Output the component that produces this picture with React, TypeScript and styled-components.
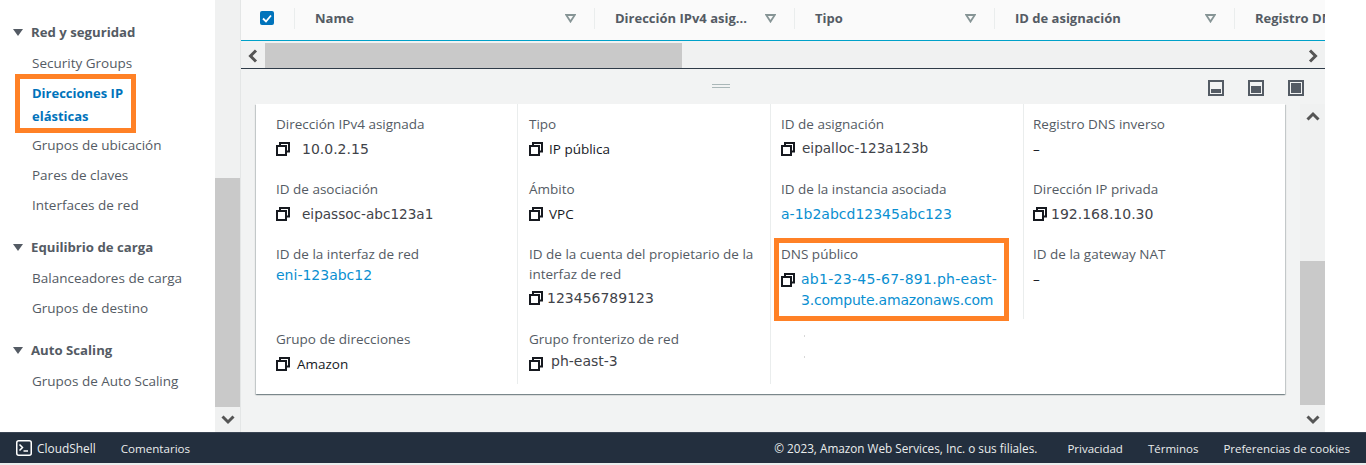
import React from 'react';
import styled, { createGlobalStyle } from 'styled-components';

const GlobalStyle = createGlobalStyle`
    html, body {
        margin: 0;
        padding: 0;
        background: #ffffff;
        overflow: hidden;
    }
    * {
        box-sizing: border-box;
    }
`;

const uiFont = `"Open Sans", "Noto Sans", sans-serif`;
const dataFont = `"DejaVu Sans", sans-serif`;

const Page = styled.div`
    width: 1366px;
    height: 465px;
    display: flex;
    flex-direction: column;
    font-family: ${uiFont};
    font-size: 13.5px;
    overflow: hidden;
    background: #fff;
`;

const Body = styled.div`
    height: 432px;
    display: flex;
`;

/* ---------- side nav ---------- */

const Sidebar = styled.nav`
    width: 215px;
    padding-top: 17px;
    background: #fff;
`;

const NavSection = styled.div`
    margin-bottom: 12px;
`;

const NavTitle = styled.div`
    height: 30px;
    margin-bottom: 1px;
    display: flex;
    align-items: center;
    gap: 8px;
    padding-left: 13px;
    font-weight: 700;
    font-size: 13.2px;
    color: #545b64;
`;

const NavItem = styled.div`
    height: 30px;
    padding-left: 32px;
    line-height: 30px;
    color: #545b64;
`;

const ActiveItem = styled.div`
    width: 121px;
    height: 59px;
    margin: -4px 0 -3px 15px;
    padding: 3px 0 0 12px;
    border: 5px solid #ff8126;
    line-height: 23px;
    font-size: 13px;
    font-weight: 700;
    color: #0073bb;
    position: relative;
`;

const Track = styled.div`
    width: 25px;
    flex: none;
    display: flex;
    flex-direction: column;
    background: #f0f1f1;
`;

const TrackSpace = styled.div<{ $size: number }>`
    height: ${(p) => p.$size}px;
    flex: none;
`;

const Thumb = styled.div<{ $size: number }>`
    height: ${(p) => p.$size}px;
    flex: none;
    background: #c9c9c9;
`;

const ArrowBox = styled.div`
    height: 25px;
    flex: none;
    display: flex;
    align-items: center;
    justify-content: center;
`;

/* ---------- main ---------- */

const Main = styled.main`
    width: 1085px;
    flex: none;
    display: flex;
    flex-direction: column;
    background: #f2f3f3;
    border-left: 1px solid #e4e6e6;
`;

const TableHead = styled.div`
    height: 41px;
    flex: none;
    display: flex;
    overflow: hidden;
    background: #fafafa;
    border-bottom: 1px solid #00a1c9;
`;

const CheckCell = styled.div`
    width: 53px;
    flex: none;
    height: 40px;
    padding-left: 19px;
    display: flex;
    align-items: center;
`;

const CheckBox = styled.div`
    width: 14px;
    height: 14px;
    border-radius: 2px;
    background: #0073bb;
    display: flex;
    align-items: center;
    justify-content: center;
    margin-top: -4px;
`;

const HeadCell = styled.div<{ $width: number }>`
    width: ${(p) => p.$width}px;
    flex: none;
    height: 40px;
    display: flex;
    align-items: center;
    justify-content: space-between;
    padding: 0 18px 4px 21px;
    font-weight: 700;
    font-size: 13px;
    color: #545b64;
    white-space: nowrap;
    position: relative;
    &::before {
        content: '';
        position: absolute;
        left: 0;
        top: 8px;
        height: 21px;
        width: 1px;
        background: #eaeded;
    }
`;

const HScroll = styled.div`
    height: 26px;
    flex: none;
    margin-top: 2px;
    display: flex;
    background: #f0f1f1;
    border-bottom: 1px solid #2f3b48;
`;

const HArrow = styled.div`
    width: 24px;
    flex: none;
    display: flex;
    align-items: center;
    justify-content: center;
`;

const HThumb = styled.div`
    width: 417px;
    flex: none;
    background: #c9c9c9;
`;

const HGap = styled.div`
    flex: 1;
`;

const PaneBar = styled.div`
    height: 35px;
    flex: none;
    position: relative;
    display: flex;
    justify-content: flex-end;
    align-items: center;
    gap: 24px;
    padding: 3px 21px 0 0;
`;

const Handle = styled.div`
    position: absolute;
    left: 471px;
    top: 15px;
    width: 18px;
    height: 4px;
    border-top: 1px solid #aab7b8;
    border-bottom: 1px solid #aab7b8;
`;

const PaneBody = styled.div`
    flex: 1;
    display: flex;
`;

const CardArea = styled.div`
    width: 1059px;
    flex: none;
    padding: 0 15px 0 15px;
`;

const Card = styled.section`
    height: 290px;
    background: #fff;
    padding-bottom: 10px;
    box-shadow: 0 1px 1px 0 rgba(0, 28, 36, 0.3), 1px 1px 1px 0 rgba(0, 28, 36, 0.15),
        -1px 1px 1px 0 rgba(0, 28, 36, 0.15);
    display: grid;
    grid-template-columns: 261px 253px 253px 262px;
    grid-template-rows: 65px 65px 85px 65px;
`;

const Cell = styled.div<{ $pad?: number; $noRule?: boolean }>`
    position: relative;
    padding: 10px 4px 0 ${(p) => p.$pad ?? 10}px;
    border-left: ${(p) => (p.$noRule ? 'none' : '1px solid #eaeded')};
`;

const Label = styled.div`
    line-height: 20px;
    color: #545b64;
`;

const Value = styled.div<{ $gap?: number; $top?: number; $leading?: number }>`
    margin-top: ${(p) => p.$top ?? 4}px;
    display: flex;
    align-items: flex-start;
    gap: ${(p) => p.$gap ?? 6}px;
    line-height: ${(p) => p.$leading ?? 23}px;
`;

const IconSlot = styled.span`
    flex: none;
    height: 22px;
    display: flex;
    align-items: center;
`;

const Plain = styled.span`
    color: #16191f;
`;

const Data = styled.span<{ $lift?: number; $size?: number }>`
    margin-top: ${(p) => -(p.$lift ?? 0)}px;
    font-family: ${dataFont};
    font-size: ${(p) => p.$size ?? 14}px;
    color: #3f4349;
`;

const LinkText = styled.span`
    font-family: ${dataFont};
    font-size: 14px;
    color: #0a8fd1;
`;

const LinkLine = styled.span<{ $track: number }>`
    display: block;
    white-space: nowrap;
    letter-spacing: ${(p) => p.$track}px;
`;

const Highlight = styled.div`
    position: absolute;
    left: 3px;
    top: 4px;
    width: 235px;
    height: 83px;
    border: 5px solid #ff8126;
    pointer-events: none;
`;

const Speck = styled.div<{ $top: number }>`
    position: absolute;
    left: 33px;
    top: ${(p) => p.$top}px;
    width: 1px;
    height: 2px;
    background: #d8d8d8;
`;

const RightGutter = styled.div`
    flex: 1;
    background: #fff;
`;

/* ---------- footer ---------- */

const Footer = styled.footer`
    height: 31px;
    flex: none;
    display: flex;
    align-items: center;
    justify-content: space-between;
    padding: 0 16px;
    background: #232f3e;
    border-top: 1px solid #3a4554;
    font-size: 11.5px;
    color: #eaeded;
`;

const FooterGroup = styled.div`
    display: flex;
    align-items: center;
`;

const FooterLink = styled.span<{ $left?: number; $size?: number }>`
    margin-left: ${(p) => p.$left ?? 0}px;
    font-size: ${(p) => p.$size ?? 11.5}px;
    white-space: nowrap;
`;

const BottomStrip = styled.div`
    height: 2px;
    flex: none;
    background: #eaeded;
`;

/* ---------- drawings ---------- */

const Caret = () => (
    <svg width="10" height="7" viewBox="0 0 10 7">
        <path d="M0 0h10L5 7z" fill="#545b64" />
    </svg>
);

const Chevron = ({ dir }: { dir: 'up' | 'down' | 'left' | 'right' }) => {
    const d = {
        up: 'M1.5 8.5L7 3l5.500 5.500',
        down: 'M1.500 2.500L7 8l5.500-5.500',
        left: 'M9 1.500L3.500 7 9 12.500',
        right: 'M3 1.500L8.500 7 3 12.500',
    }[dir];
    const vertical = dir === 'up' || dir === 'down';
    return (
        <svg width={vertical ? 14 : 12} height={vertical ? 11 : 14} viewBox={vertical ? '0 0 14 11' : '0 0 12 14'}>
            <path d={d} fill="none" stroke="#555" strokeWidth="3" />
        </svg>
    );
};

const SortArrow = () => (
    <svg width="11" height="9" viewBox="0 0 11 9">
        <path d="M1.200 1h8.600L5.500 7.600z" fill="none" stroke="#879596" strokeWidth="1.800" />
    </svg>
);

const CopyIcon = () => (
    <svg width="14" height="14" viewBox="0 0 14 14">
        <path d="M4 3.500V1h9v8.500h-2.500" fill="none" stroke="#16191f" strokeWidth="2" />
        <rect x="1" y="4" width="9" height="9" fill="none" stroke="#16191f" strokeWidth="2" />
    </svg>
);

const PaneIcon = ({ fill }: { fill: number }) => (
    <svg width="16" height="16" viewBox="0 0 16 16">
        <rect x="0" y="0" width="16" height="16" fill="#545b64" />
        <rect x="2" y="2" width="12" height="12" fill="#f2f3f3" />
        <rect x="3" y={13 - fill} width="10" height={fill} fill="#545b64" />
    </svg>
);

const ShellIcon = () => (
    <svg width="16" height="16" viewBox="0 0 16 16">
        <rect x="0.750" y="0.750" width="14.500" height="14.500" rx="2" fill="none" stroke="#fff" strokeWidth="1.500" />
        <path d="M3.500 4.500L6.500 7.500 3.500 10.500M7.500 11h4.500" fill="none" stroke="#fff" strokeWidth="1.500" />
    </svg>
);

const Copyable = ({
    gap,
    top,
    leading,
    children,
}: {
    gap?: number;
    top?: number;
    leading?: number;
    children: React.ReactNode;
}) => (
    <Value $gap={gap} $top={top} $leading={leading}>
        <IconSlot>
            <CopyIcon />
        </IconSlot>
        {children}
    </Value>
);

const headers = [
    { title: 'Name', width: 300 },
    { title: 'Dirección IPv4 asig...', width: 200 },
    { title: 'Tipo', width: 200 },
    { title: 'ID de asignación', width: 240 },
    { title: 'Registro DNS inverso', width: 240 },
];

export default function App() {
    return (
        <Page>
            <GlobalStyle />
            <Body>
                <Sidebar>
                    <NavSection>
                        <NavTitle>
                            <Caret />
                            Red y seguridad
                        </NavTitle>
                        <NavItem>Security Groups</NavItem>
                        <ActiveItem>
                            Direcciones IP
                            <br />
                            elásticas
                        </ActiveItem>
                        <NavItem>Grupos de ubicación</NavItem>
                        <NavItem>Pares de claves</NavItem>
                        <NavItem>Interfaces de red</NavItem>
                    </NavSection>
                    <NavSection>
                        <NavTitle>
                            <Caret />
                            Equilibrio de carga
                        </NavTitle>
                        <NavItem>Balanceadores de carga</NavItem>
                        <NavItem>Grupos de destino</NavItem>
                    </NavSection>
                    <NavSection>
                        <NavTitle>
                            <Caret />
                            Auto Scaling
                        </NavTitle>
                        <NavItem>Grupos de Auto Scaling</NavItem>
                    </NavSection>
                </Sidebar>
                <Track>
                    <TrackSpace $size={178} />
                    <Thumb $size={229} />
                    <ArrowBox>
                        <Chevron dir="down" />
                    </ArrowBox>
                </Track>
                <Main>
                    <TableHead>
                        <CheckCell>
                            <CheckBox>
                                <svg width="10" height="9" viewBox="0 0 10 9">
                                    <path d="M1 4.500L4 7.500 9 1.500" fill="none" stroke="#fff" strokeWidth="1.800" />
                                </svg>
                            </CheckBox>
                        </CheckCell>
                        {headers.map((h) => (
                            <HeadCell key={h.title} $width={h.width}>
                                {h.title}
                                <SortArrow />
                            </HeadCell>
                        ))}
                    </TableHead>
                    <HScroll>
                        <HArrow>
                            <Chevron dir="left" />
                        </HArrow>
                        <HThumb />
                        <HGap />
                        <HArrow>
                            <Chevron dir="right" />
                        </HArrow>
                    </HScroll>
                    <PaneBar>
                        <Handle />
                        <PaneIcon fill={4} />
                        <PaneIcon fill={7} />
                        <PaneIcon fill={10} />
                    </PaneBar>
                    <PaneBody>
                        <CardArea>
                            <Card>
                                <Cell $pad={20} $noRule>
                                    <Label>Dirección IPv4 asignada</Label>
                                    <Copyable gap={12}>
                                        <Data>10.0.2.15</Data>
                                    </Copyable>
                                </Cell>
                                <Cell $pad={11}>
                                    <Label>Tipo</Label>
                                    <Copyable>
                                        <Plain>IP pública</Plain>
                                    </Copyable>
                                </Cell>
                                <Cell>
                                    <Label>ID de asignación</Label>
                                    <Copyable gap={7}>
                                        <Data $lift={1} $size={13.6}>
                                            eipalloc-123a123b
                                        </Data>
                                    </Copyable>
                                </Cell>
                                <Cell $pad={9}>
                                    <Label>Registro DNS inverso</Label>
                                    <Value>
                                        <Plain>–</Plain>
                                    </Value>
                                </Cell>

                                <Cell $pad={20} $noRule>
                                    <Label>ID de asociación</Label>
                                    <Copyable gap={12}>
                                        <Data $size={13.6}>eipassoc-abc123a1</Data>
                                    </Copyable>
                                </Cell>
                                <Cell $pad={11}>
                                    <Label>Ámbito</Label>
                                    <Copyable>
                                        <Plain>VPC</Plain>
                                    </Copyable>
                                </Cell>
                                <Cell>
                                    <Label>ID de la instancia asociada</Label>
                                    <Value>
                                        <LinkText>a-1b2abcd12345abc123</LinkText>
                                    </Value>
                                </Cell>
                                <Cell $pad={9}>
                                    <Label>Dirección IP privada</Label>
                                    <Copyable gap={4}>
                                        <Data>192.168.10.30</Data>
                                    </Copyable>
                                </Cell>

                                <Cell $pad={20} $noRule>
                                    <Label>ID de la interfaz de red</Label>
                                    <Value $top={0}>
                                        <LinkText>eni-123abc12</LinkText>
                                    </Value>
                                </Cell>
                                <Cell $pad={11}>
                                    <Label>
                                        ID de la cuenta del propietario de la
                                        <br />
                                        interfaz de red
                                    </Label>
                                    <Copyable gap={4} top={3}>
                                        <Data>123456789123</Data>
                                    </Copyable>
                                </Cell>
                                <Cell>
                                    <Highlight />
                                    <Label>DNS público</Label>
                                    <Copyable top={5} leading={21}>
                                        <LinkText>
                                            <LinkLine $track={0.28}>ab1-23-45-67-891.ph-east-</LinkLine>
                                            <LinkLine $track={-0.2}>3.compute.amazonaws.com</LinkLine>
                                        </LinkText>
                                    </Copyable>
                                </Cell>
                                <Cell $pad={9}>
                                    <Label>ID de la gateway NAT</Label>
                                    <Value>
                                        <Plain>–</Plain>
                                    </Value>
                                </Cell>

                                <Cell $pad={20} $noRule>
                                    <Label>Grupo de direcciones</Label>
                                    <Copyable gap={7}>
                                        <Plain>Amazon</Plain>
                                    </Copyable>
                                </Cell>
                                <Cell $pad={11}>
                                    <Label>Grupo fronterizo de red</Label>
                                    <Copyable gap={8}>
                                        <Data $lift={3}>ph-east-3</Data>
                                    </Copyable>
                                </Cell>
                                <Cell>
                                    <Speck $top={16} />
                                    <Speck $top={37} />
                                </Cell>
                                <Cell $noRule />
                            </Card>
                        </CardArea>
                        <Track>
                            <ArrowBox>
                                <Chevron dir="up" />
                            </ArrowBox>
                            <TrackSpace $size={132} />
                            <Thumb $size={144} />
                            <TrackSpace $size={2} />
                            <ArrowBox>
                                <Chevron dir="down" />
                            </ArrowBox>
                        </Track>
                    </PaneBody>
                </Main>
                <RightGutter />
            </Body>
            <Footer>
                <FooterGroup>
                    <ShellIcon />
                    <FooterLink $left={5} $size={11.9}>
                        CloudShell
                    </FooterLink>
                    <FooterLink $left={25} $size={11.6}>
                        Comentarios
                    </FooterLink>
                </FooterGroup>
                <FooterGroup>
                    <FooterLink $size={11.75}>© 2023, Amazon Web Services, Inc. o sus filiales.</FooterLink>
                    <FooterLink $left={30}>Privacidad</FooterLink>
                    <FooterLink $left={25}>Términos</FooterLink>
                    <FooterLink $left={25}>Preferencias de cookies</FooterLink>
                </FooterGroup>
            </Footer>
            <BottomStrip />
        </Page>
    );
}
